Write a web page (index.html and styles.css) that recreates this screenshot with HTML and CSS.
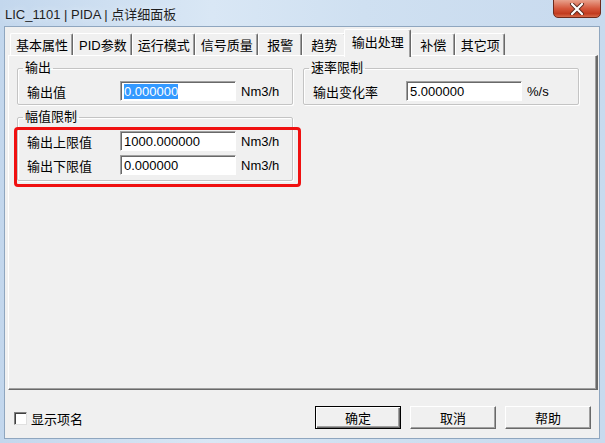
FILE: index.html
```html
<!DOCTYPE html>
<html lang="zh-CN">
<head>
    <meta charset="UTF-8">
    <title>LIC_1101 | PIDA | 点详细面板</title>
    <link rel="stylesheet" href="styles.css">
</head>
<body>
    <div class="ventana">
        <div class="barra-titulo">
            <span class="titulo">LIC_1101 | PIDA | 点详细面板</span>
            <div class="cerrar">
                <svg width="16" height="12" viewBox="0 0 16 12">
                    <path d="M3 1 L13 11 M13 1 L3 11" stroke="#5a2a20" stroke-width="4" stroke-linecap="round"/>
                    <path d="M3 1 L13 11 M13 1 L3 11" stroke="#fff" stroke-width="2.2" stroke-linecap="round"/>
                </svg>
            </div>
        </div>

        <div class="cliente">
            <div class="pestanas">
                <div class="pestana">基本属性</div>
                <div class="pestana">PID参数</div>
                <div class="pestana">运行模式</div>
                <div class="pestana">信号质量</div>
                <div class="pestana">报警</div>
                <div class="pestana">趋势</div>
                <div class="pestana activa">输出处理</div>
                <div class="pestana">补偿</div>
                <div class="pestana">其它项</div>
            </div>

            <div class="panel">
                <div class="columna">
                    <fieldset class="grupo">
                        <legend>输出</legend>
                        <div class="fila">
                            <span class="etiqueta">输出值</span>
                            <div class="campo"><span class="seleccion">0.000000</span></div>
                            <span class="unidad">Nm3/h</span>
                        </div>
                    </fieldset>
                    <fieldset class="grupo amplitud">
                        <legend>幅值限制</legend>
                        <div class="fila">
                            <span class="etiqueta">输出上限值</span>
                            <div class="campo">1000.000000</div>
                            <span class="unidad">Nm3/h</span>
                        </div>
                        <div class="fila">
                            <span class="etiqueta">输出下限值</span>
                            <div class="campo">0.000000</div>
                            <span class="unidad">Nm3/h</span>
                        </div>
                    </fieldset>
                    <div class="marca-roja"></div>
                </div>
                <div class="columna">
                    <fieldset class="grupo">
                        <legend>速率限制</legend>
                        <div class="fila">
                            <span class="etiqueta">输出变化率</span>
                            <div class="campo">5.000000</div>
                            <span class="unidad">%/s</span>
                        </div>
                    </fieldset>
                </div>
            </div>

            <div class="pie">
                <label class="mostrar">
                    <span class="casilla"></span>
                    显示项名
                </label>
                <div class="botones">
                    <button class="boton defecto">确定</button>
                    <button class="boton">取消</button>
                    <button class="boton">帮助</button>
                </div>
            </div>
        </div>
    </div>
</body>
</html>
```

FILE: styles.css
```css
body {
    margin: 0;
    padding: 0;
    font-family: "Liberation Sans", "Noto Sans CJK SC", sans-serif;
    font-size: 13px;
    color: #000;
}

.ventana {
    width: 605px;
    height: 443px;
    box-sizing: border-box;
    display: flex;
    flex-direction: column;
    background: linear-gradient(to right, #c3d7ed, #d9e7f5 35%, #cfe0f1 60%, #c8daee);
    padding: 0 5px 4px 4px;
}

.barra-titulo {
    height: 26px;
    display: flex;
    align-items: flex-start;
    justify-content: space-between;
}

.titulo {
    margin-top: 4px;
    margin-left: 1px;
    font-size: 13px;
    color: #1e1e1e;
    text-shadow: 0 0 6px #eaf2fb;
}

.cerrar {
    width: 46px;
    height: 17px;
    margin-top: -1px;
    margin-right: -1px;
    border: 1px solid #6d2a1c;
    border-radius: 0 0 5px 5px;
    background: linear-gradient(to bottom, #e8a18c, #d5573c 50%, #c23b1f 80%, #d76a4a);
    display: flex;
    align-items: center;
    justify-content: center;
}

.cliente {
    flex: 1;
    background-color: #f0f0f0;
    border: 1px solid #8fa6bf;
    display: flex;
    flex-direction: column;
}

/* pestanas */
.pestanas {
    display: flex;
    align-items: flex-end;
    height: 26px;
    padding: 2px 0 0 5px;
}

.pestana {
    height: 22px;
    min-width: 44px;
    box-sizing: border-box;
    padding: 0 4px 0 5px;
    display: flex;
    align-items: center;
    justify-content: center;
    border-top: 1px solid #fff;
    border-left: 1px solid #fff;
    border-right: 1px solid #696969;
    box-shadow: inset -1px 0 0 #a0a0a0;
    border-radius: 2px 2px 0 0;
    white-space: nowrap;
}

.pestana.activa {
    height: 28px;
    margin: 0 0 -2px -2px;
    padding: 0 6px 4px 7px;
    background-color: #f0f0f0;
    position: relative;
    z-index: 1;
}

.panel {
    height: 335px;
    box-sizing: border-box;
    margin: 0 1px 0 3px;
    border-top: 1px solid #fff;
    border-left: 1px solid #fff;
    border-right: 2px solid #696969;
    border-bottom: 1px solid #696969;
    box-shadow: inset -1px -1px 0 #a0a0a0;
    padding: 5px 0 0 8px;
    display: flex;
    gap: 10px;
}

.columna {
    width: 276px;
    position: relative;
}

.grupo {
    margin: 0;
    padding: 0 8px 3px 8px;
    border: 1px solid #c4c4c4;
    box-shadow: inset 1px 1px 0 #fff, 1px 1px 0 #fff;
    border-radius: 2px;
}

.grupo legend {
    padding: 0 2px;
    margin-left: -3px;
    line-height: 14px;
}

.amplitud {
    margin-top: 5px;
    padding-bottom: 5px;
}

.fila {
    display: flex;
    align-items: center;
    height: 20px;
    margin-top: 6px;
}

.amplitud .fila {
    margin-top: 4px;
}

.amplitud .fila:first-of-type {
    margin-top: 7px;
}

.etiqueta {
    width: 93px;
    margin-left: 1px;
}

.campo {
    width: 116px;
    height: 20px;
    box-sizing: border-box;
    background-color: #fff;
    border: 1px solid;
    border-color: #a0a0a0 #fff #fff #a0a0a0;
    box-shadow: inset 1px 1px 0 #696969;
    padding: 2px 0 0 3px;
    line-height: 15px;
}

.seleccion {
    background-color: #3399ff;
    color: #fff;
}

.unidad {
    margin-left: 5px;
}

.marca-roja {
    position: absolute;
    left: -3px;
    top: 66px;
    width: 281px;
    height: 54px;
    border: 3px solid #f01010;
    border-radius: 4px;
}

/* pie */
.pie {
    flex: 1;
    display: flex;
    align-items: flex-start;
    justify-content: space-between;
    padding: 16px 8px 0 9px;
}

.mostrar {
    display: flex;
    align-items: center;
    gap: 4px;
    margin-top: 3px;
}

.casilla {
    width: 11px;
    height: 11px;
    background-color: #fff;
    border: 1px solid;
    border-color: #808080 #e0e0e0 #e0e0e0 #808080;
    box-shadow: inset 1px 1px 0 #404040;
}

.botones {
    display: flex;
    gap: 9px;
}

.boton {
    width: 86px;
    height: 23px;
    font-family: "Liberation Sans", "Noto Sans CJK SC", sans-serif;
    font-size: 13px;
    color: #000;
    background-color: #f0f0f0;
    border: 1px solid;
    border-color: #fff #696969 #696969 #fff;
    box-shadow: inset -1px -1px 0 #a0a0a0;
    padding: 0;
}

.boton.defecto {
    border: 1px solid #000;
    box-shadow: inset 1px 1px 0 #fff, inset -1px -1px 0 #696969, inset -2px -2px 0 #a0a0a0;
}
```
